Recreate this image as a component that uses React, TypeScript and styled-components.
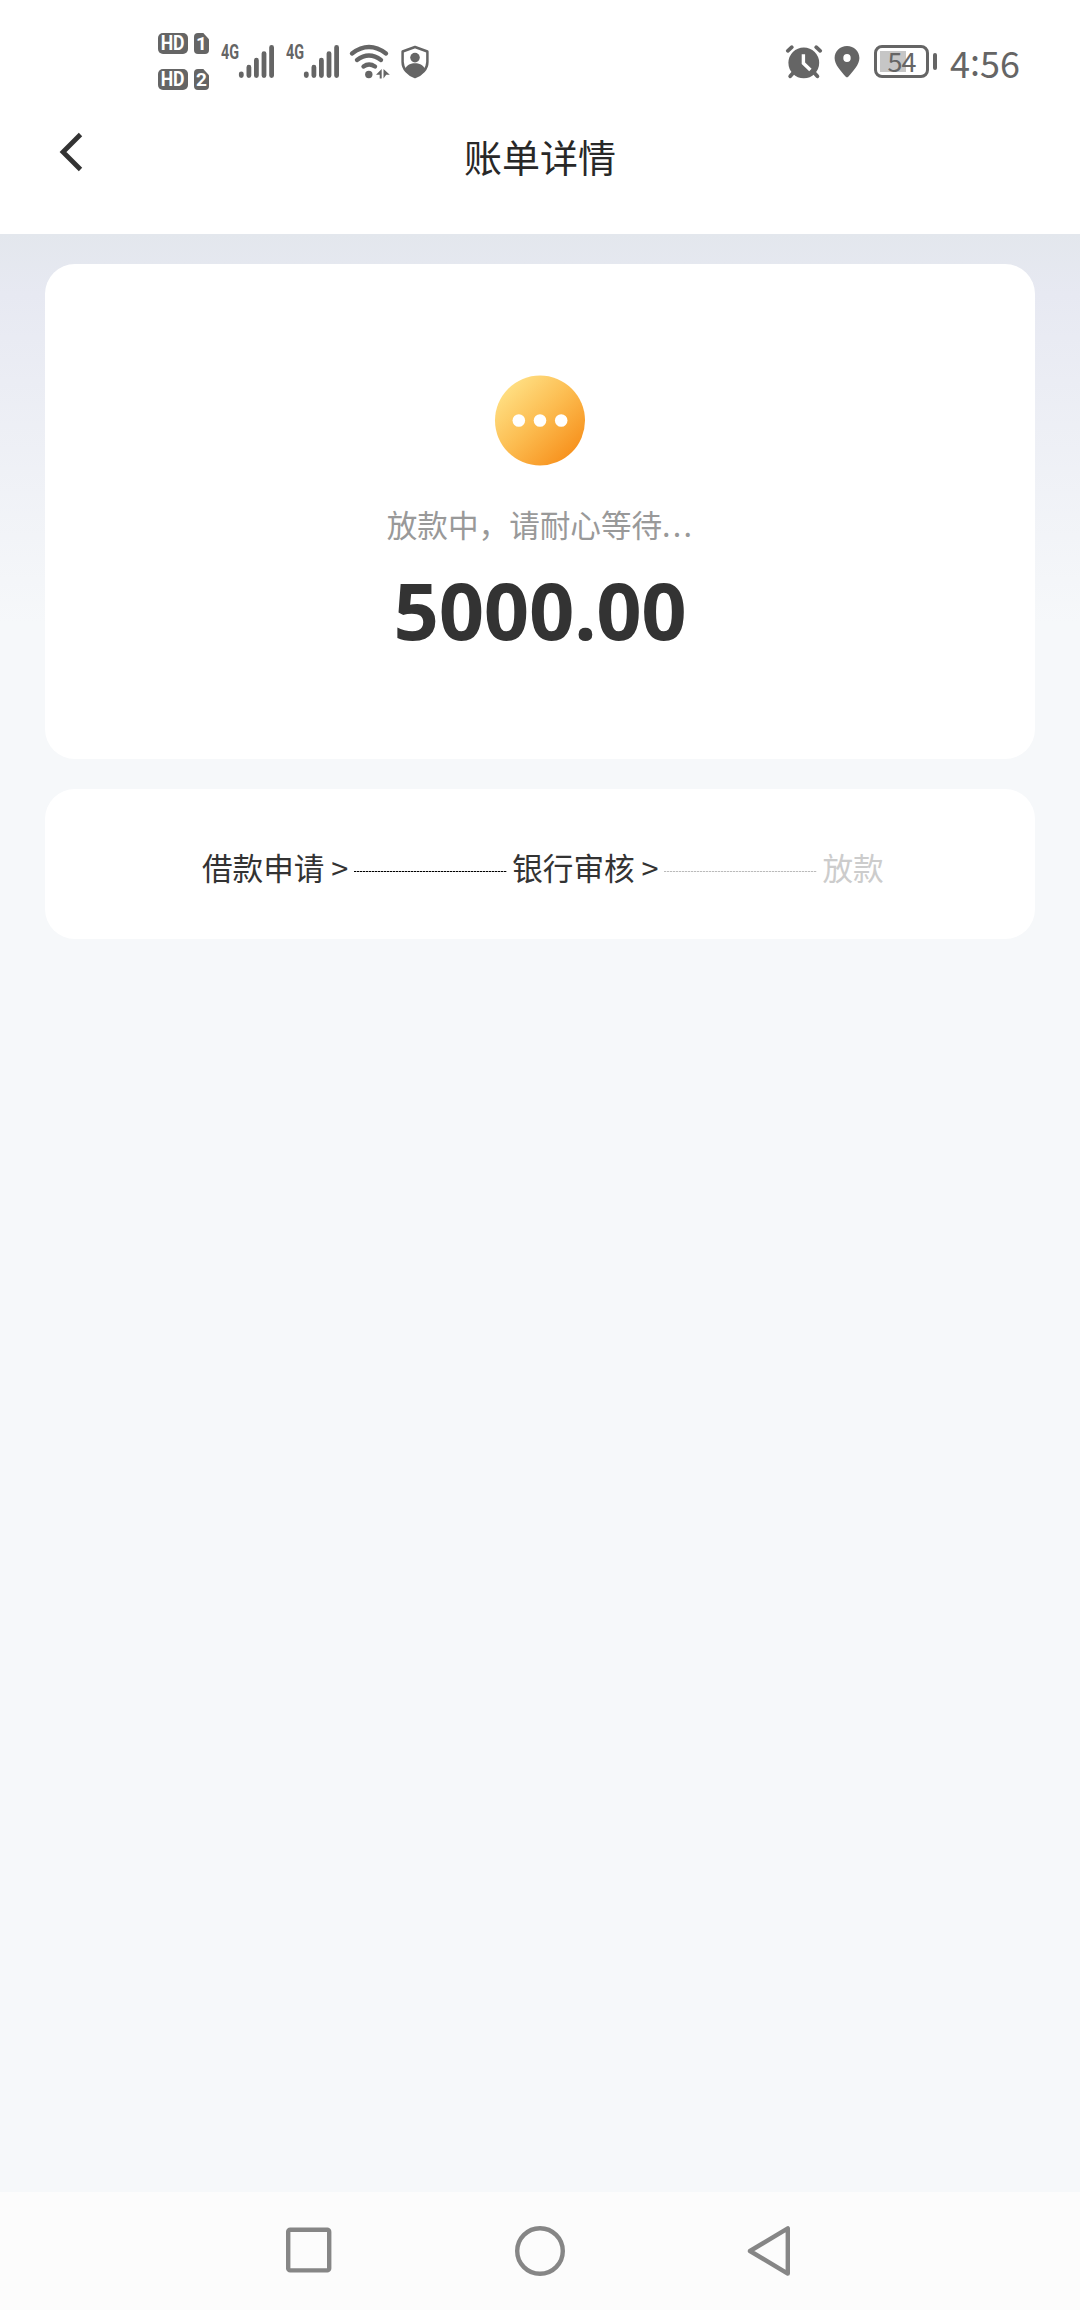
import React from "react";
import styled, { createGlobalStyle } from "styled-components";

const sans = `"Noto Sans CJK SC", "Noto Sans", sans-serif`;
const ink = "#656565";

const GlobalStyle = createGlobalStyle`
  * { box-sizing: border-box; }
  body { margin: 0; background: #f6f8fa; font-family: ${sans}; }
  svg { display: block; flex: none; overflow: visible; }
`;

const Screen = styled.div`
  display: flex;
  flex-direction: column;
  width: 1080px;
  height: 2310px;
  overflow: hidden;
  background: #f6f8fa;
`;

const StatusBar = styled.div`
  display: flex;
  justify-content: space-between;
  height: 100px;
  padding: 0 60px 0 158px;
  background: #fff;
  color: ${ink};
`;

const StatusGroup = styled.div`
  display: flex;
  align-items: flex-start;
  padding-top: 45px;
`;

const Space = styled.span<{ $w: number }>`
  flex: none;
  width: ${(p) => p.$w}px;
`;

const SimStack = styled.div`
  display: flex;
  flex-direction: column;
  gap: 15px;
  margin: -12px 11px 0 0;
`;

const SimRow = styled.div`
  display: flex;
  gap: 6px;
`;

const Chip = styled.span<{ $w: number; $sim?: boolean }>`
  display: flex;
  align-items: center;
  justify-content: center;
  width: ${(p) => p.$w}px;
  height: 21px;
  border-radius: ${(p) => (p.$sim ? "4px 0 4px 4px" : "5px")};
  background: ${ink};
  color: #fff;
  font: 700 ${(p) => (p.$sim ? 19 : 20)}px/21px Roboto, sans-serif;
  ${(p) => p.$sim && "clip-path: polygon(0 0, 62% 0, 100% 30%, 100% 100%, 0 100%);"}
`;

const Network = styled.span`
  width: 18px;
  margin-top: -1px;
  font: 700 20px/17px Roboto, sans-serif;
  white-space: nowrap;
`;

const Squeeze = styled.span<{ $x: number; $center?: boolean }>`
  display: inline-block;
  transform: scaleX(${(p) => p.$x});
  transform-origin: ${(p) => (p.$center ? "50%" : "0")} 50%;
`;

const Battery = styled.div`
  display: flex;
  align-items: center;
  justify-content: center;
  width: 55px;
  height: 33px;
  margin-left: 14px;
  padding-bottom: 3px;
  border: 3.5px solid ${ink};
  border-radius: 8px;
  background: linear-gradient(#c6c6c6, #c6c6c6) 3px 3px / 26px 21px no-repeat;
  font: 400 27px/25px ${sans};
  letter-spacing: -1px;
`;

const Terminal = styled.span`
  width: 4px;
  height: 17px;
  margin: 8px 13px 0 4px;
  border-radius: 2px;
  background: ${ink};
`;

const Clock = styled.span`
  width: 70px;
  margin-top: -1px;
  font: 400 36px/36px ${sans};
  white-space: nowrap;
`;

const Colon = styled.span`
  display: inline-block;
  transform: translateY(-2px);
`;

const Header = styled.header`
  display: grid;
  grid-template-columns: 160px 1fr 160px;
  height: 134px;
  padding-top: 29px;
  background: #fff;
`;

const BackButton = styled.button`
  display: flex;
  align-items: flex-start;
  height: 50px;
  padding: 3px 0 0 59px;
  border: 0;
  background: none;
`;

const Title = styled.h1`
  margin: 0;
  color: #282828;
  font: 400 38px/54px ${sans};
  text-align: center;
`;

const Content = styled.main`
  display: flex;
  flex: 1;
  flex-direction: column;
  gap: 30px;
  padding: 30px 45px;
  background: linear-gradient(#e3e7ed 0, #e7e9f2 60px, #f6f8fa 390px);
`;

const ResultCard = styled.section`
  display: flex;
  flex-direction: column;
  align-items: center;
  height: 495px;
  padding-top: 111px;
  border-radius: 30px;
  background: #fff;
`;

const Message = styled.p`
  margin: 35px 0 0;
  padding-left: 1px;
  color: #999;
  font: 400 30.6px/44px ${sans};
`;

const Dots = styled.span`
  letter-spacing: 2.2px;
`;

const Amount = styled.strong`
  margin-top: 8px;
  color: #333;
  font: 700 79.5px/110px "Noto Sans", sans-serif;
  letter-spacing: -0.3px;
`;

const StepsCard = styled.section`
  display: flex;
  align-items: center;
  height: 150px;
  padding: 0 0 0 157px;
  border-radius: 30px;
  background: #fff;
`;

const Step = styled.span<{ $off?: boolean }>`
  margin-top: 6px;
  color: ${(p) => (p.$off ? "#ccc" : "#333")};
  font: 400 30.6px/44px ${sans};
  white-space: pre;
`;

const Connector = styled.span<{ $off?: boolean }>`
  width: 153px;
  height: 1px;
  margin: 15px 5px 0 6px;
  background: repeating-linear-gradient(
    90deg,
    ${(p) => (p.$off ? "#bbb" : "#000")} 0 2px,
    ${(p) => (p.$off ? "#eee" : "#aaa")} 2px 3px
  );
`;

const NavBar = styled.nav`
  display: flex;
  align-items: center;
  gap: 182px;
  height: 118px;
  padding: 0 0 0 285px;
  background: #fcfcfc;
`;

const Bars = () => (
  <svg width="35" height="33" viewBox="0 0 35 33" stroke={ink} strokeWidth="4.8" strokeLinecap="round">
    <path d="M2.3 28.8v1.7M9.9 22.2v8.3M17.4 15.2v15.3M25 8.6v21.9M32.6 2.5v28" />
  </svg>
);

const Signal = () => (
  <>
    <Network><Squeeze $x={0.72}>4G</Squeeze></Network>
    <Bars />
  </>
);

const Wifi = () => (
  <svg width="40" height="34" viewBox="0 0 40 34" fill="none" stroke={ink} strokeWidth="4.4" strokeLinecap="round">
    <path d="M2 8.5Q19 -4.5 36 8.5M7 15Q19 6 31 15M13.5 21.5Q19 17.5 25 21.5" />
    <circle cx="18.8" cy="29.5" r="3.7" fill={ink} stroke="none" />
    <path d="M26 29.8l5.7-5.8v9.4h-2v-3.6zM33.5 24l6.3 5.8h-3.6l-2.7 3.6z" fill={ink} stroke="none" />
  </svg>
);

const Shield = () => (
  <svg width="28" height="34" viewBox="0 0 28 34" fill={ink}>
    <path d="M14 2L26.4 6.5V17C26.4 24 21 29.7 14 32C7 29.7 1.6 24 1.6 17V6.5Z" fill="none" stroke={ink} strokeWidth="2.5" strokeLinejoin="round" />
    <circle cx="14" cy="12.6" r="4.8" />
    <path d="M4 25C5 20.5 8.5 18.2 14 18.2S23 20.5 24 25Q20 30.5 14 32.5Q8 30.5 4 25Z" />
  </svg>
);

const Alarm = () => (
  <svg width="36" height="34" viewBox="0 0 36 34" fill={ink} stroke={ink} strokeLinecap="round">
    <circle cx="17.8" cy="17.8" r="15.4" stroke="none" />
    <path d="M1.8 5.8L5.8 2.2M30.2 2.2L34.2 5.8M7.5 27.5L4.2 31.3M28 27.5L31.4 31.3" strokeWidth="3.8" />
    <path d="M17.4 9.2V18.2L24.4 25" fill="none" stroke="#fff" strokeWidth="3.4" strokeLinecap="butt" />
  </svg>
);

const Pin = () => (
  <svg width="26" height="33" viewBox="0 0 26 33">
    <path fill={ink} fillRule="evenodd" d="M13 1C20 1 25.4 6.2 25.4 13C25.4 20 19 26 14.5 31.6Q13 33.2 11.5 31.6C7 26 .6 20 .6 13C.6 6.2 6 1 13 1ZM13 9A3.7 4 0 1 0 13 17A3.7 4 0 1 0 13 9Z" />
  </svg>
);

const Pending = () => (
  <svg width="92" height="92" viewBox="0 0 92 92">
    <defs>
      <linearGradient id="amber" x1=".12" y1=".12" x2=".85" y2=".88">
        <stop offset="0" stopColor="#ffe084" />
        <stop offset=".5" stopColor="#fcbc50" />
        <stop offset="1" stopColor="#f7921e" />
      </linearGradient>
    </defs>
    <circle cx="46" cy="45.5" r="45" fill="url(#amber)" />
    <g fill="#fff">
      <circle cx="24.8" cy="45.5" r="6.3" />
      <circle cx="46" cy="45.5" r="6.3" />
      <circle cx="67.2" cy="45.5" r="6.3" />
    </g>
  </svg>
);

export default function App() {
  return (
    <>
      <GlobalStyle />
      <Screen>
        <StatusBar>
          <StatusGroup>
            <SimStack>
              {["1", "2"].map((n) => (
                <SimRow key={n}>
                  <Chip $w={30}><Squeeze $x={0.88} $center>HD</Squeeze></Chip>
                  <Chip $w={15} $sim>{n}</Chip>
                </SimRow>
              ))}
            </SimStack>
            <Space $w={1} />
            <Signal />
            <Space $w={12} />
            <Signal />
            <Space $w={11} />
            <Wifi />
            <Space $w={11} />
            <Shield />
          </StatusGroup>
          <StatusGroup>
            <Alarm />
            <Space $w={12} />
            <Pin />
            <Battery>54</Battery>
            <Terminal />
            <Clock>4<Colon>:</Colon>56</Clock>
          </StatusGroup>
        </StatusBar>
        <Header>
          <BackButton aria-label="返回">
            <svg width="24" height="40" viewBox="0 0 24 40" fill="none" stroke="#333" strokeWidth="4.8">
              <path d="M21.5 2.5L4 20L21.5 37.5" />
            </svg>
          </BackButton>
          <Title>账单详情</Title>
        </Header>
        <Content>
          <ResultCard>
            <Pending />
            <Message>放款中，请耐心等待<Dots>...</Dots></Message>
            <Amount>5000.00</Amount>
          </ResultCard>
          <StepsCard>
            <Step>借款申请 &gt;</Step>
            <Connector />
            <Step>银行审核 &gt;</Step>
            <Connector $off />
            <Step $off>放款</Step>
          </StepsCard>
        </Content>
        <NavBar>
          <svg width="48" height="52" viewBox="0 0 48 52" fill="none" stroke="#868686" strokeWidth="4.4">
            <rect x="3.2" y="4.8" width="41" height="40.6" rx="2" />
          </svg>
          <svg width="50" height="52" viewBox="0 0 50 52" fill="none" stroke="#868686" strokeWidth="4.4">
            <circle cx="25" cy="26" r="22.8" />
          </svg>
          <svg width="44" height="52" viewBox="0 0 44 52" fill="none" stroke="#868686" strokeWidth="4.4" strokeLinejoin="round">
            <path d="M40.8 3.4V48.6L3 26Z" />
          </svg>
        </NavBar>
      </Screen>
    </>
  );
}
